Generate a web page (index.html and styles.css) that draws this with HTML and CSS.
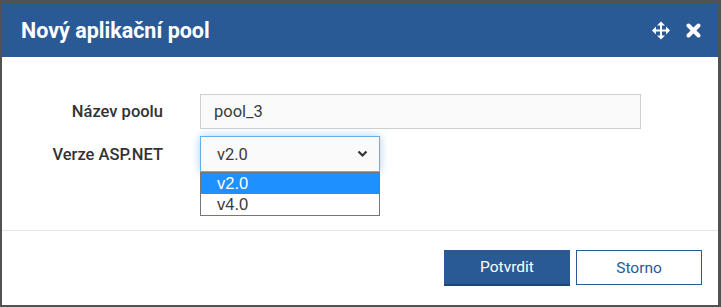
FILE: index.html
```html
<!DOCTYPE html>
<html lang="cs">
<head>
<meta charset="utf-8">
<title>Nový aplikační pool</title>
<link rel="stylesheet" href="styles.css">
</head>
<body>
<div class="dialog">
  <div class="header">
    <h1 class="title">Nový aplikační pool</h1>
    <div class="tools">
      <svg class="icon-move" width="18" height="19" viewBox="0 0 18 19">
        <path d="M9 2v15M1.5 9.5h15" stroke="#fff" stroke-width="2"/>
        <path d="M9 0.5l-4 4h8z M9 18.5l-4-4h8z M0 9.5l4-4v8z M18 9.5l-4-4v8z" fill="#fff"/>
      </svg>
      <svg class="icon-close" width="15" height="15" viewBox="0 0 15 15">
        <path d="M2.5 2.5l10 10M12.5 2.5l-10 10" stroke="#fff" stroke-width="4" stroke-linecap="round"/>
      </svg>
    </div>
  </div>
  <div class="content">
    <div class="row">
      <label class="label">Název poolu</label>
      <div class="input">pool_3</div>
    </div>
    <div class="row">
      <label class="label">Verze ASP.NET</label>
      <div class="select-wrap">
        <div class="select">
          <span>v2.0</span>
          <svg class="chevron" width="11" height="8" viewBox="0 0 11 8">
            <path d="M1.5 1.5l4 4 4-4" stroke="#333" stroke-width="2.2" fill="none"/>
          </svg>
        </div>
        <ul class="options">
          <li class="option selected">v2.0</li>
          <li class="option">v4.0</li>
        </ul>
      </div>
    </div>
  </div>
  <div class="footer">
    <button class="btn btn-primary">Potvrdit</button>
    <button class="btn btn-secondary">Storno</button>
  </div>
</div>
</body>
</html>
```
FILE: styles.css
```css
* { box-sizing: border-box; }
html, body { margin: 0; padding: 0; }
body {
  width: 721px;
  height: 307px;
  background: #525252;
  padding: 3px 3px 2px 2px;
  font-family: Roboto, "Liberation Sans", sans-serif;
  overflow: hidden;
}
.dialog {
  background: #fff;
  height: 302px;
  display: flex;
  flex-direction: column;
}
.header {
  height: 54px;
  background: #2a5a96;
  display: flex;
  align-items: center;
  justify-content: space-between;
  padding: 0 17px 0 19px;
  flex: none;
}
.title {
  margin: 0;
  color: #fff;
  font-size: 21.5px;
  font-weight: 700;
  letter-spacing: 0;
}
.tools {
  display: flex;
  align-items: center;
  gap: 16px;
  padding-top: 1px;
}
.icon-close { margin-top: -1px; }
.content {
  height: 174px;
  padding-top: 37px;
  display: flex;
  flex-direction: column;
  gap: 7px;
  border-bottom: 1px solid #e5e5e5;
  flex: none;
}
.row {
  display: flex;
  align-items: center;
}
.label {
  width: 161px;
  text-align: right;
  margin-right: 37px;
  font-size: 16.5px;
  font-weight: 500;
  color: #333;
}
.input {
  width: 441px;
  height: 35px;
  background: #fafafa;
  border: 1px solid #cfcfcf;
  padding: 0 13px;
  display: flex;
  align-items: center;
  font-size: 16.5px;
  color: #3a3a3a;
}
.select-wrap {
  position: relative;
}
.select {
  width: 180px;
  height: 36px;
  background: #fafafa;
  border: 1px solid #66afe9;
  box-shadow: 0 0 8px rgba(102, 175, 233, 0.6);
  padding: 0 11px 0 16px;
  display: flex;
  align-items: center;
  justify-content: space-between;
  font-size: 16.5px;
  color: #3a3a3a;
}
.options {
  position: absolute;
  left: 0;
  top: 36px;
  width: 180px;
  margin: 0;
  padding: 0;
  list-style: none;
  border: 1px solid #767676;
  background: #fff;
  font-family: "Liberation Sans", Arial, sans-serif;
  font-size: 16.5px;
}
.option {
  height: 21px;
  line-height: 21px;
  padding-left: 16px;
  color: #3a3a3a;
}
.option.selected {
  background: #1e90ff;
  color: #fff;
}
.footer {
  flex: 1;
  display: flex;
  justify-content: flex-end;
  align-items: flex-start;
  gap: 6px;
  padding: 19px 16px 0 0;
}
.btn {
  width: 126px;
  height: 36px;
  font-family: Roboto, "Liberation Sans", sans-serif;
  font-size: 15.5px;
  cursor: pointer;
}
.btn-primary {
  background: #2a5a96;
  color: #fff;
  border: none;
  border-bottom: 2px solid #1d4472;
}
.btn-secondary {
  background: #fff;
  color: #2a5a96;
  border: 1px solid #2a5a96;
  height: 35px;
}
```
